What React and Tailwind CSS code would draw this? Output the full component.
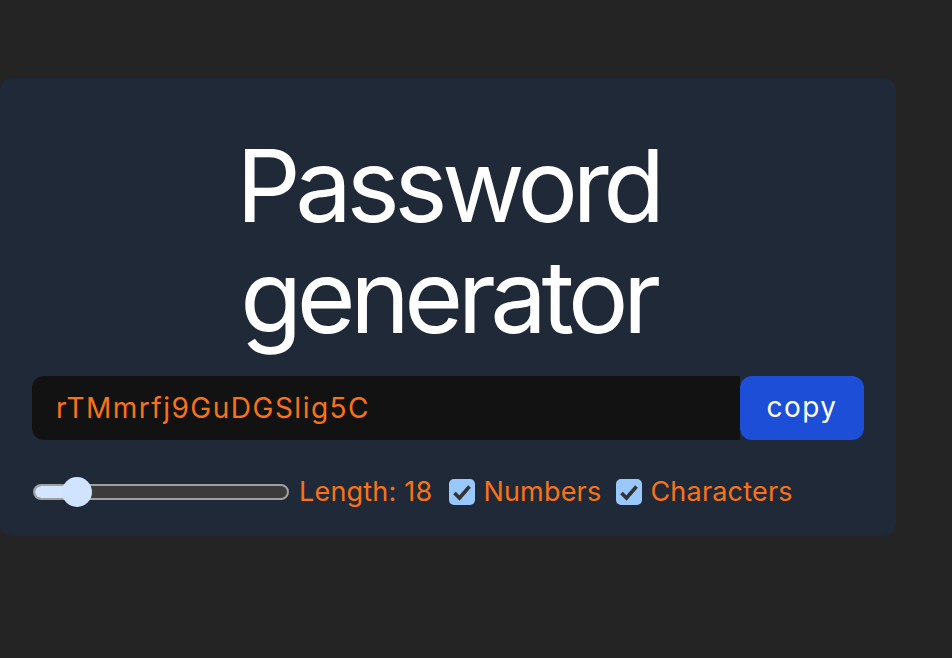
export default function App() {
  const Check = () => (
    <div className="w-[26px] h-[26px] rounded-[5px] bg-[#99c8ff] flex items-center justify-center shrink-0">
      <svg width="26" height="26" viewBox="0 0 26 26">
        <path d="M5.5 14 L10.5 19 L20.5 7.5" fill="none" stroke="#333" strokeWidth="3.6" strokeLinecap="butt" strokeLinejoin="miter" />
      </svg>
    </div>
  );
  return (
    <div className="w-full min-h-screen bg-[#242424] pt-[78px] font-['Inter','Liberation_Sans',sans-serif]">
      <div className="w-[896px] rounded-xl bg-[#1f2937] px-8 pt-[52px] pb-[29px]">
        <h1 className="text-center text-white text-[101px] leading-[111px] font-normal tracking-[-5.5px]">
          Password
          <br />
          generator
        </h1>
        <div className="mt-6 flex h-16">
          <div className="flex-1 flex items-center bg-[#121212] rounded-l-xl pl-6 text-[28px] tracking-[1.5px] text-[#f97316]">
            rTMmrfj9GuDGSlig5C
          </div>
          <button className="w-[124px] rounded-xl bg-[#1d4ed8] text-white text-[28px] tracking-[1.5px] pb-0.5">
            copy
          </button>
        </div>
        <div className="mt-[37px] flex h-[30px] items-center text-[27px] tracking-[0.2px] text-[#f97316]">
          <div className="relative ml-px w-[256px] h-[30px] flex items-center">
            <div className="w-full h-4 rounded-full border-2 border-[#a0a0a0] bg-[#3b3b3b] overflow-hidden flex">
              <div className="w-[44px] h-full bg-[#d3e5ff]" />
            </div>
            <div className="absolute left-[29px] top-0 w-[30px] h-[30px] rounded-full bg-[#d0e4ff]" />
          </div>
          <span className="ml-[10px]">Length: 18</span>
          <div className="ml-[17px]"><Check /></div>
          <span className="ml-[8px]">Numbers</span>
          <div className="ml-[15px]"><Check /></div>
          <span className="ml-[8px]">Characters</span>
        </div>
      </div>
    </div>
  );
}
